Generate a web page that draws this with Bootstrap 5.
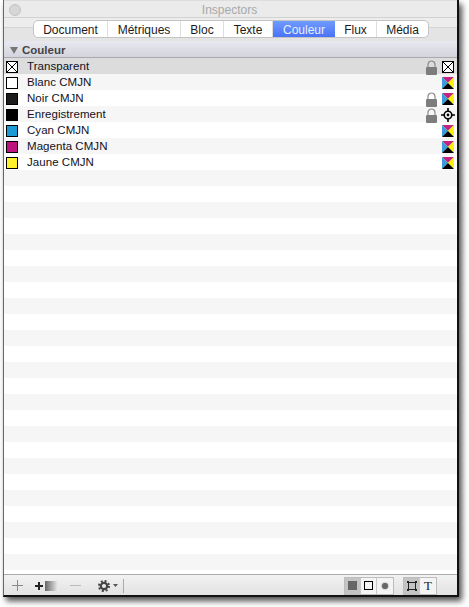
<!DOCTYPE html>
<html lang="en">

<head>
  <meta charset="UTF-8">
  <title>Inspectors</title>
  <link href="https://cdn.jsdelivr.net/npm/bootstrap@5.3.0/dist/css/bootstrap.min.css" rel="stylesheet">
  <style>
    html, body {
      height: 607px;
      background: #fff;
      overflow: hidden;
    }

    body {
      padding: 0 10px 10px 3px;
      font-family: "Liberation Sans", Arial, sans-serif;
    }

    .insp-window {
      height: 597px;
      width: 456px;
      border: 1px solid #111;
      border-width: 0 2px 2px 1px;
      border-left-color: #666;
      background: #ececec;
      box-shadow: 3px 4px 6px rgba(0, 0, 0, .7);
    }

    .insp-title {
      height: 18px;
      background: #ebebeb;
      border-top: 1px solid #ddd;
      border-bottom: 1px solid #d2d2d2;
      color: #a9a9a9;
      font-size: 12px;
      line-height: 19px;
      padding-right: 2px;
    }

    .insp-close {
      left: 5px;
      top: 3px;
      width: 12px;
      height: 12px;
      border-radius: 50%;
      background: #d6d6d6;
      border: 1px solid #c2c2c2;
    }

    .insp-tabbar {
      height: 23px;
      padding: 2px 0 0 29px;
      background: linear-gradient(#ededed 0 9px, #d4d4d4 9px 10px, #e4e4e4 10px);
    }

    .insp-tabs {
      border: 1px solid #c4c4c4;
      border-radius: 5px;
      background: #fff;
      height: 18px;
      width: 396px;
      overflow: hidden;
    }

    .insp-tab {
      font-size: 12px;
      line-height: 18px;
      color: #1c1c1c;
      border-right: 1px solid #dedede;
      text-align: center;
    }

    .insp-tab:last-child { border-right: 0; }

    .insp-tab.on {
      background: linear-gradient(#6f9cff, #4a72f6);
      color: #e8efff;
      border-right: 0;
    }

    .w-doc { width: 74px; }
    .w-met { width: 73px; }
    .w-blo { width: 43px; }
    .w-tex { width: 49px; }
    .w-cou { width: 62px; }
    .w-flu { width: 42px; }
    .w-med { width: 51px; }

    .insp-head {
      height: 17px;
      background: linear-gradient(#e8e8f0, #d4d4de);
      border-bottom: 1px solid #aaa;
      font-size: 11.5px;
      font-weight: 700;
      color: #444;
      padding: 3px 0 0 6px;
    }

    .insp-tri {
      width: 0;
      height: 0;
      border-left: 4px solid transparent;
      border-right: 4px solid transparent;
      border-top: 7px solid #777;
      margin-right: 4px;
    }

    .insp-list {
      background: repeating-linear-gradient(#fff 0 16px, #f6f6f6 16px 32px);
    }

    .insp-row {
      height: 16px;
      font-size: 11.5px;
      letter-spacing: .05px;
      color: #111122;
      padding: 2px 3px 0 2px;
    }

    .insp-row.sel { background: #dcdcdc; }

    .insp-swatch {
      width: 12px;
      height: 12px;
      border: 1px solid #000;
      margin-right: 9px;
      flex: none;
    }

    .sw-none { border: 0; }
    .sw-white { background: #fff; }
    .sw-noir { background: #1c1c1c; }
    .sw-reg { background: #000; }
    .sw-cyan { background: #1b9ad6; }
    .sw-magenta { background: #bd1480; }
    .sw-yellow { background: #fff22d; }

    .insp-lock { margin-right: 5px; }
    .insp-target { margin: 0 -1px 0 -1px; }

    .insp-foot {
      height: 21px;
      padding: 1px 0 0 7px;
      border-top: 1px solid #aaa;
      background: linear-gradient(#f2f2f2, #e2e2e2);
    }

    .insp-ramp {
      width: 13px;
      height: 10px;
      background: linear-gradient(90deg, #666, #eee);
    }

    .insp-rule {
      width: 1px;
      height: 14px;
      background: #aaa;
    }

    .m-add { margin-left: 11px; margin-right: 2px; }
    .m-minus { margin-left: 12px; }
    .m-gear { margin-left: 17px; }
    .m-caret { margin-left: 3px; }
    .m-rule { margin-left: 5px; }
    .m-seg2 { margin-left: 9px; }
    .m-end { margin-right: 20px; }

    .insp-seg {
      border: 1px solid #bdbdbd;
      background: #f4f4f4;
      height: 18px;
    }

    .insp-seg > span {
      width: 16px;
      height: 16px;
      border-right: 1px solid #c8c8c8;
      color: #222;
      font: 13px/16px "Liberation Serif", serif;
    }

    .insp-seg > span:last-child { border-right: 0; }
    .insp-seg > span.on { background: #c4c4c4; }

    .insp-fill {
      width: 9px;
      height: 9px;
      background: #666;
    }

    .insp-hollow {
      width: 9px;
      height: 9px;
      border: 1px solid #000;
    }

    .insp-dot {
      width: 6px;
      height: 6px;
      border-radius: 50%;
      background: #666;
      box-shadow: 0 0 2px #777;
    }
  </style>
</head>

<body>
  <svg width="0" height="0" class="position-absolute">
    <symbol id="lock" viewBox="0 0 11 15">
      <path d="M2 7V4.500a3.500 3.500 0 0 1 7 0V7" fill="none" stroke="#8a8a8a" stroke-width="1.200" />
      <rect x="0" y="7" width="11" height="8" rx="1" fill="#7d7d7d" />
    </symbol>
    <symbol id="cmyk" viewBox="0 0 12 12">
      <path d="M0 0H12L6 6Z" fill="#c0267f" />
      <path d="M0 0V12L6 6Z" fill="#3d9bd8" />
      <path d="M12 0V12L6 6Z" fill="#fff200" />
      <path d="M0 12H12L6 6Z" fill="#000" />
    </symbol>
    <symbol id="none" viewBox="0 0 12 12">
      <rect x=".5" y=".5" width="11" height="11" fill="#fff" stroke="#000" />
      <path d="M1 1L11 11M11 1L1 11" stroke="#000" />
    </symbol>
    <symbol id="target" viewBox="0 0 13 13">
      <circle cx="6.500" cy="6.500" r="3.500" fill="#fff" stroke="#000" stroke-width="1.500" />
      <circle cx="6.500" cy="6.500" r="1.300" fill="#000" />
      <path d="M6.500 0V3M6.500 10V13M0 6.500H3M10 6.500H13" stroke="#000" stroke-width="1.500" />
    </symbol>
  </svg>

  <div class="insp-window d-flex flex-column">
    <div class="insp-title position-relative text-center">
      <span class="insp-close position-absolute"></span>
      Inspectors
    </div>

    <div class="insp-tabbar">
      <div class="insp-tabs d-flex">
        <div class="insp-tab w-doc">Document</div>
        <div class="insp-tab w-met">Métriques</div>
        <div class="insp-tab w-blo">Bloc</div>
        <div class="insp-tab w-tex">Texte</div>
        <div class="insp-tab w-cou on">Couleur</div>
        <div class="insp-tab w-flu">Flux</div>
        <div class="insp-tab w-med">Média</div>
      </div>
    </div>

    <div class="insp-head d-flex align-items-center">
      <span class="insp-tri"></span>Couleur
    </div>

    <div class="insp-list flex-grow-1 overflow-hidden">
      <div class="insp-row sel d-flex align-items-center">
        <svg class="insp-swatch sw-none" width="12" height="12"><use href="#none" /></svg>
        <span class="flex-grow-1">Transparent</span>
        <svg width="11" height="15" class="insp-lock"><use href="#lock" /></svg>
        <svg width="12" height="12"><use href="#none" /></svg>
      </div>
      <div class="insp-row d-flex align-items-center">
        <span class="insp-swatch sw-white"></span>
        <span class="flex-grow-1">Blanc CMJN</span>
        <svg width="12" height="12"><use href="#cmyk" /></svg>
      </div>
      <div class="insp-row d-flex align-items-center">
        <span class="insp-swatch sw-noir"></span>
        <span class="flex-grow-1">Noir CMJN</span>
        <svg width="11" height="15" class="insp-lock"><use href="#lock" /></svg>
        <svg width="12" height="12"><use href="#cmyk" /></svg>
      </div>
      <div class="insp-row d-flex align-items-center">
        <span class="insp-swatch sw-reg"></span>
        <span class="flex-grow-1">Enregistrement</span>
        <svg width="11" height="15" class="insp-lock"><use href="#lock" /></svg>
        <svg class="insp-target" width="14" height="14"><use href="#target" /></svg>
      </div>
      <div class="insp-row d-flex align-items-center">
        <span class="insp-swatch sw-cyan"></span>
        <span class="flex-grow-1">Cyan CMJN</span>
        <svg width="12" height="12"><use href="#cmyk" /></svg>
      </div>
      <div class="insp-row d-flex align-items-center">
        <span class="insp-swatch sw-magenta"></span>
        <span class="flex-grow-1">Magenta CMJN</span>
        <svg width="12" height="12"><use href="#cmyk" /></svg>
      </div>
      <div class="insp-row d-flex align-items-center">
        <span class="insp-swatch sw-yellow"></span>
        <span class="flex-grow-1">Jaune CMJN</span>
        <svg width="12" height="12"><use href="#cmyk" /></svg>
      </div>
    </div>

    <div class="insp-foot d-flex align-items-center">
      <svg width="13" height="13"><path d="M6.500 1V12M1 6.500H12" stroke="#8a8a8a" /></svg>
      <svg class="m-add" width="8" height="8"><path d="M4 0V8M0 4H8" stroke="#222" stroke-width="2" /></svg>
      <span class="insp-ramp"></span>
      <svg class="m-minus" width="11" height="3"><path d="M0 1.500H11" stroke="#bbb" /></svg>
      <svg class="m-gear" width="12" height="12" viewBox="0 0 12 12">
        <circle cx="6" cy="6" r="3.200" fill="none" stroke="#444" stroke-width="2.200" />
        <circle cx="6" cy="6" r="5" fill="none" stroke="#444" stroke-width="2" stroke-dasharray="2 1.930" />
      </svg>
      <svg class="m-caret" width="5" height="4"><path d="M0 0H5L2.500 3Z" fill="#555" /></svg>
      <span class="insp-rule m-rule"></span>

      <div class="insp-seg d-flex ms-auto">
        <span class="on d-flex align-items-center justify-content-center"><i class="insp-fill"></i></span>
        <span class="d-flex align-items-center justify-content-center"><i class="insp-hollow"></i></span>
        <span class="d-flex align-items-center justify-content-center"><i class="insp-dot"></i></span>
      </div>
      <div class="insp-seg d-flex m-seg2 m-end">
        <span class="on d-flex align-items-center justify-content-center">
          <svg width="10" height="10">
            <path d="M1.500 1.500H8.500V8.500H1.500Z" fill="none" stroke="#222" />
            <path d="M0 0H2V2H0ZM8 0H10V2H8ZM0 8H2V10H0ZM8 8H10V10H8Z" fill="#222" />
          </svg>
        </span>
        <span class="d-flex align-items-center justify-content-center">T</span>
      </div>
    </div>
  </div>
</body>

</html>
